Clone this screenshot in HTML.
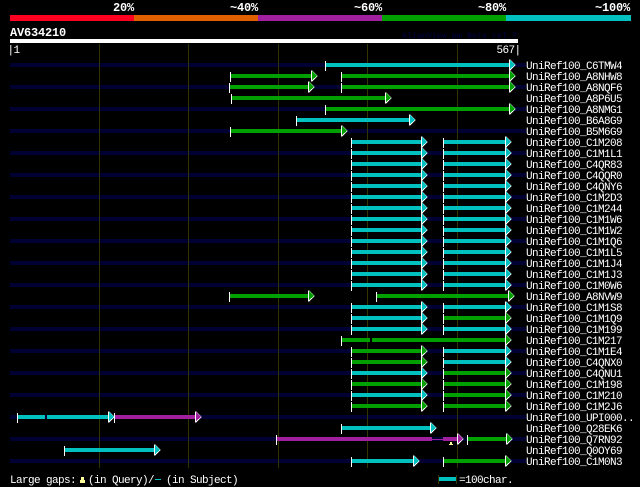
<!DOCTYPE html>
<html><head><meta charset="utf-8"><style>
html,body{margin:0;padding:0;background:#000;width:640px;height:487px;overflow:hidden}
svg{display:block}
text{font-family:"Liberation Mono",monospace;font-size:11px;letter-spacing:-.6px;fill:#fff}
.b{font-weight:bold;font-size:12px;letter-spacing:-.2px}
.n{fill:#000033}.o{fill:#333300}.w{fill:#fff}
.C{fill:#00c0c0}.G{fill:#00a000}.P{fill:#a020a0}
</style></head><body>
<svg width="640" height="487" viewBox="0 0 640 487" xmlns="http://www.w3.org/2000/svg" shape-rendering="crispEdges">
<defs>
<g id="a"><polygon class="w" points="0,-6 1,-6 6.5,-0.5 1,5 0,5"/><polygon fill="currentColor" points="1,-5.5 6,-0.5 1,3.5"/></g>
<g id="L"><rect class="w" x="351" y="-4" width="1" height="10"/><rect fill="currentColor" x="352" y="-2" width="70" height="4"/><use href="#a" x="421" y="0.5"/></g>
<g id="R"><rect class="w" x="443" y="-4" width="1" height="10"/><rect fill="currentColor" x="444" y="-2" width="62" height="4"/><use href="#a" x="505" y="0.5"/></g>
<g id="t"><rect class="w" x="0" y="-4" width="1" height="10"/></g>
</defs>
<rect x="10" y="15" width="124" height="6" fill="#ff0020"/>
<rect x="134" y="15" width="124" height="6" fill="#e06000"/>
<rect x="258" y="15" width="124" height="6" fill="#a020a0"/>
<rect x="382" y="15" width="124" height="6" fill="#00a000"/>
<rect x="506" y="15" width="125" height="6" fill="#00c0c0"/>
<text class="b" x="113" y="11">20%</text>
<text class="b" x="230" y="11">~40%</text>
<text class="b" x="354" y="11">~60%</text>
<text class="b" x="478" y="11">~80%</text>
<text class="b" x="595" y="11">~100%</text>
<text class="b" x="10" y="36">AV634210</text>
<text x="402" y="38" style="font-size:8.33px;letter-spacing:0;font-weight:bold;fill:#000033">AlignView.pm Beta rel.7</text>
<rect class="w" x="10" y="39" width="508" height="4"/>
<text x="7.5" y="53">|1</text>
<text x="496.5" y="53">567|</text>

<g class="n">
<rect x="10" y="63" width="516" height="4"/><rect x="10" y="85" width="516" height="4"/><rect x="10" y="107" width="516" height="4"/><rect x="10" y="129" width="516" height="4"/><rect x="10" y="151" width="516" height="4"/><rect x="10" y="173" width="516" height="4"/><rect x="10" y="195" width="516" height="4"/><rect x="10" y="217" width="516" height="4"/><rect x="10" y="239" width="516" height="4"/><rect x="10" y="261" width="516" height="4"/><rect x="10" y="283" width="516" height="4"/><rect x="10" y="305" width="516" height="4"/><rect x="10" y="327" width="516" height="4"/><rect x="10" y="349" width="516" height="4"/><rect x="10" y="371" width="516" height="4"/><rect x="10" y="393" width="516" height="4"/><rect x="10" y="415" width="516" height="4"/><rect x="10" y="437" width="516" height="4"/><rect x="10" y="459" width="516" height="4"/>
</g>
<g class="o">
<rect x="99" y="44" width="1" height="424"/><rect x="188" y="44" width="1" height="424"/><rect x="278" y="44" width="1" height="424"/><rect x="367" y="44" width="1" height="424"/><rect x="457" y="44" width="1" height="424"/>
</g>

<!-- row 65 -->
<use href="#t" x="325" y="65"/><rect class="C" x="326" y="63" width="184" height="4"/><use href="#a" x="509" y="65.5" color="#00c0c0"/>
<!-- row 76 -->
<use href="#t" x="230" y="76"/><rect class="G" x="231" y="74" width="81" height="4"/><use href="#a" x="311" y="76.5" color="#00a000"/>
<use href="#t" x="341" y="76"/><rect class="G" x="342" y="74" width="168" height="4"/><use href="#a" x="509" y="76.5" color="#00a000"/>
<!-- row 87 -->
<use href="#t" x="229" y="87"/><rect class="G" x="230" y="85" width="80" height="4"/><use href="#a" x="308" y="87.5" color="#00a000"/>
<use href="#t" x="341" y="87"/><rect class="G" x="342" y="85" width="168" height="4"/><use href="#a" x="509" y="87.5" color="#00a000"/>
<!-- row 98 -->
<use href="#t" x="231" y="98"/><rect class="G" x="232" y="96" width="154" height="4"/><use href="#a" x="385" y="98.5" color="#00a000"/>
<!-- row 109 -->
<use href="#t" x="325" y="109"/><rect class="G" x="326" y="107" width="184" height="4"/><use href="#a" x="509" y="109.5" color="#00a000"/>
<!-- row 120 -->
<use href="#t" x="296" y="120"/><rect class="C" x="297" y="118" width="113" height="4"/><use href="#a" x="409" y="120.5" color="#00c0c0"/>
<!-- row 131 -->
<use href="#t" x="230" y="131"/><rect class="G" x="231" y="129" width="111" height="4"/><use href="#a" x="341" y="131.5" color="#00a000"/>

<g color="#00c0c0">
<use href="#L" y="142"/><use href="#R" y="142"/><use href="#L" y="153"/><use href="#R" y="153"/><use href="#L" y="164"/><use href="#R" y="164"/><use href="#L" y="175"/><use href="#R" y="175"/><use href="#L" y="186"/><use href="#R" y="186"/><use href="#L" y="197"/><use href="#R" y="197"/><use href="#L" y="208"/><use href="#R" y="208"/><use href="#L" y="219"/><use href="#R" y="219"/><use href="#L" y="230"/><use href="#R" y="230"/><use href="#L" y="241"/><use href="#R" y="241"/><use href="#L" y="252"/><use href="#R" y="252"/><use href="#L" y="263"/><use href="#R" y="263"/><use href="#L" y="274"/><use href="#R" y="274"/><use href="#L" y="285"/><use href="#R" y="285"/>
<use href="#L" y="307"/><use href="#R" y="307"/><use href="#L" y="318"/><use href="#L" y="329"/><use href="#R" y="329"/>
<use href="#R" y="351"/><use href="#R" y="362"/><use href="#L" y="373"/><use href="#L" y="395"/>
</g>
<g color="#00a000">
<use href="#R" y="318"/><use href="#L" y="351"/><use href="#L" y="362"/><use href="#R" y="373"/><use href="#L" y="384"/><use href="#R" y="384"/><use href="#R" y="395"/><use href="#L" y="406"/><use href="#R" y="406"/>
</g>
<!-- row 296 -->
<use href="#t" x="229" y="296"/><rect class="G" x="230" y="294" width="80" height="4"/><use href="#a" x="308" y="296.5" color="#00a000"/>
<use href="#t" x="376" y="296"/><rect class="G" x="377" y="294" width="132" height="4"/><use href="#a" x="508" y="296.5" color="#00a000"/>
<!-- row 340 -->
<use href="#t" x="341" y="340"/><rect class="G" x="342" y="338" width="28" height="4"/><rect class="G" x="372" y="338" width="134" height="4"/><use href="#a" x="505" y="340.5" color="#00a000"/>
<!-- row 417 -->
<use href="#t" x="17" y="417"/><rect class="C" x="18" y="415" width="27" height="4"/><rect class="C" x="47" y="415" width="62" height="4"/><use href="#a" x="108" y="417.5" color="#00c0c0"/>
<use href="#t" x="114" y="417"/><rect class="P" x="115" y="415" width="81" height="4"/><use href="#a" x="195" y="417.5" color="#a020a0"/>
<!-- row 428 -->
<use href="#t" x="341" y="428"/><rect class="C" x="342" y="426" width="89" height="4"/><use href="#a" x="430" y="428.5" color="#00c0c0"/>
<!-- row 439 -->
<use href="#t" x="276" y="439"/><rect class="P" x="277" y="437" width="155" height="4"/><rect class="P" x="432" y="439" width="11" height="1"/><rect class="P" x="443" y="437" width="15" height="4"/><use href="#a" x="457" y="439.5" color="#a020a0"/>
<rect x="450" y="442" width="2" height="2" fill="#ffff99"/><rect x="449" y="444" width="4" height="1" fill="#ffff99"/>
<use href="#t" x="467" y="439"/><rect class="G" x="468" y="437" width="39" height="4"/><use href="#a" x="506" y="439.5" color="#00a000"/>
<!-- row 450 -->
<use href="#t" x="64" y="450"/><rect class="C" x="65" y="448" width="90" height="4"/><use href="#a" x="154" y="450.5" color="#00c0c0"/>
<!-- row 461 -->
<use href="#t" x="351" y="461"/><rect class="C" x="352" y="459" width="62" height="4"/><use href="#a" x="413" y="461.5" color="#00c0c0"/>
<use href="#R" y="461" color="#00a000"/>

<g>
<text x="526" y="69">UniRef100_C6TMW4</text>
<text x="526" y="80">UniRef100_A8NHW8</text>
<text x="526" y="91">UniRef100_A8NQF6</text>
<text x="526" y="102">UniRef100_A8P6U5</text>
<text x="526" y="113">UniRef100_A8NMG1</text>
<text x="526" y="124">UniRef100_B6A8G9</text>
<text x="526" y="135">UniRef100_B5M6G9</text>
<text x="526" y="146">UniRef100_C1M208</text>
<text x="526" y="157">UniRef100_C1M1L1</text>
<text x="526" y="168">UniRef100_C4QR83</text>
<text x="526" y="179">UniRef100_C4QQR0</text>
<text x="526" y="190">UniRef100_C4QNY6</text>
<text x="526" y="201">UniRef100_C1M2D3</text>
<text x="526" y="212">UniRef100_C1M244</text>
<text x="526" y="223">UniRef100_C1M1W6</text>
<text x="526" y="234">UniRef100_C1M1W2</text>
<text x="526" y="245">UniRef100_C1M1Q6</text>
<text x="526" y="256">UniRef100_C1M1L5</text>
<text x="526" y="267">UniRef100_C1M1J4</text>
<text x="526" y="278">UniRef100_C1M1J3</text>
<text x="526" y="289">UniRef100_C1M0W6</text>
<text x="526" y="300">UniRef100_A8NVW9</text>
<text x="526" y="311">UniRef100_C1M1S8</text>
<text x="526" y="322">UniRef100_C1M1Q9</text>
<text x="526" y="333">UniRef100_C1M199</text>
<text x="526" y="344">UniRef100_C1M217</text>
<text x="526" y="355">UniRef100_C1M1E4</text>
<text x="526" y="366">UniRef100_C4QNX0</text>
<text x="526" y="377">UniRef100_C4QNU1</text>
<text x="526" y="388">UniRef100_C1M198</text>
<text x="526" y="399">UniRef100_C1M210</text>
<text x="526" y="410">UniRef100_C1M2J6</text>
<text x="526" y="421">UniRef100_UPI000..</text>
<text x="526" y="432">UniRef100_Q28EK6</text>
<text x="526" y="443">UniRef100_Q7RN92</text>
<text x="526" y="454">UniRef100_Q0OY69</text>
<text x="526" y="465">UniRef100_C1M0N3</text>
</g>

<text x="10" y="483">Large gaps:</text>
<rect x="81" y="477" width="3" height="3" fill="#ffff99"/><rect x="80" y="480" width="5" height="3" fill="#ffff99"/>
<text x="88" y="483">(in Query)/</text>
<rect class="C" x="155" y="479" width="6" height="1"/>
<text x="166" y="483">(in Subject)</text>
<rect class="o" x="438" y="475" width="1" height="9"/><rect class="o" x="456" y="475" width="1" height="9"/>
<rect class="C" x="439" y="477" width="17" height="4"/>
<text x="459" y="483">=100char.</text>
</svg>
</body></html>
